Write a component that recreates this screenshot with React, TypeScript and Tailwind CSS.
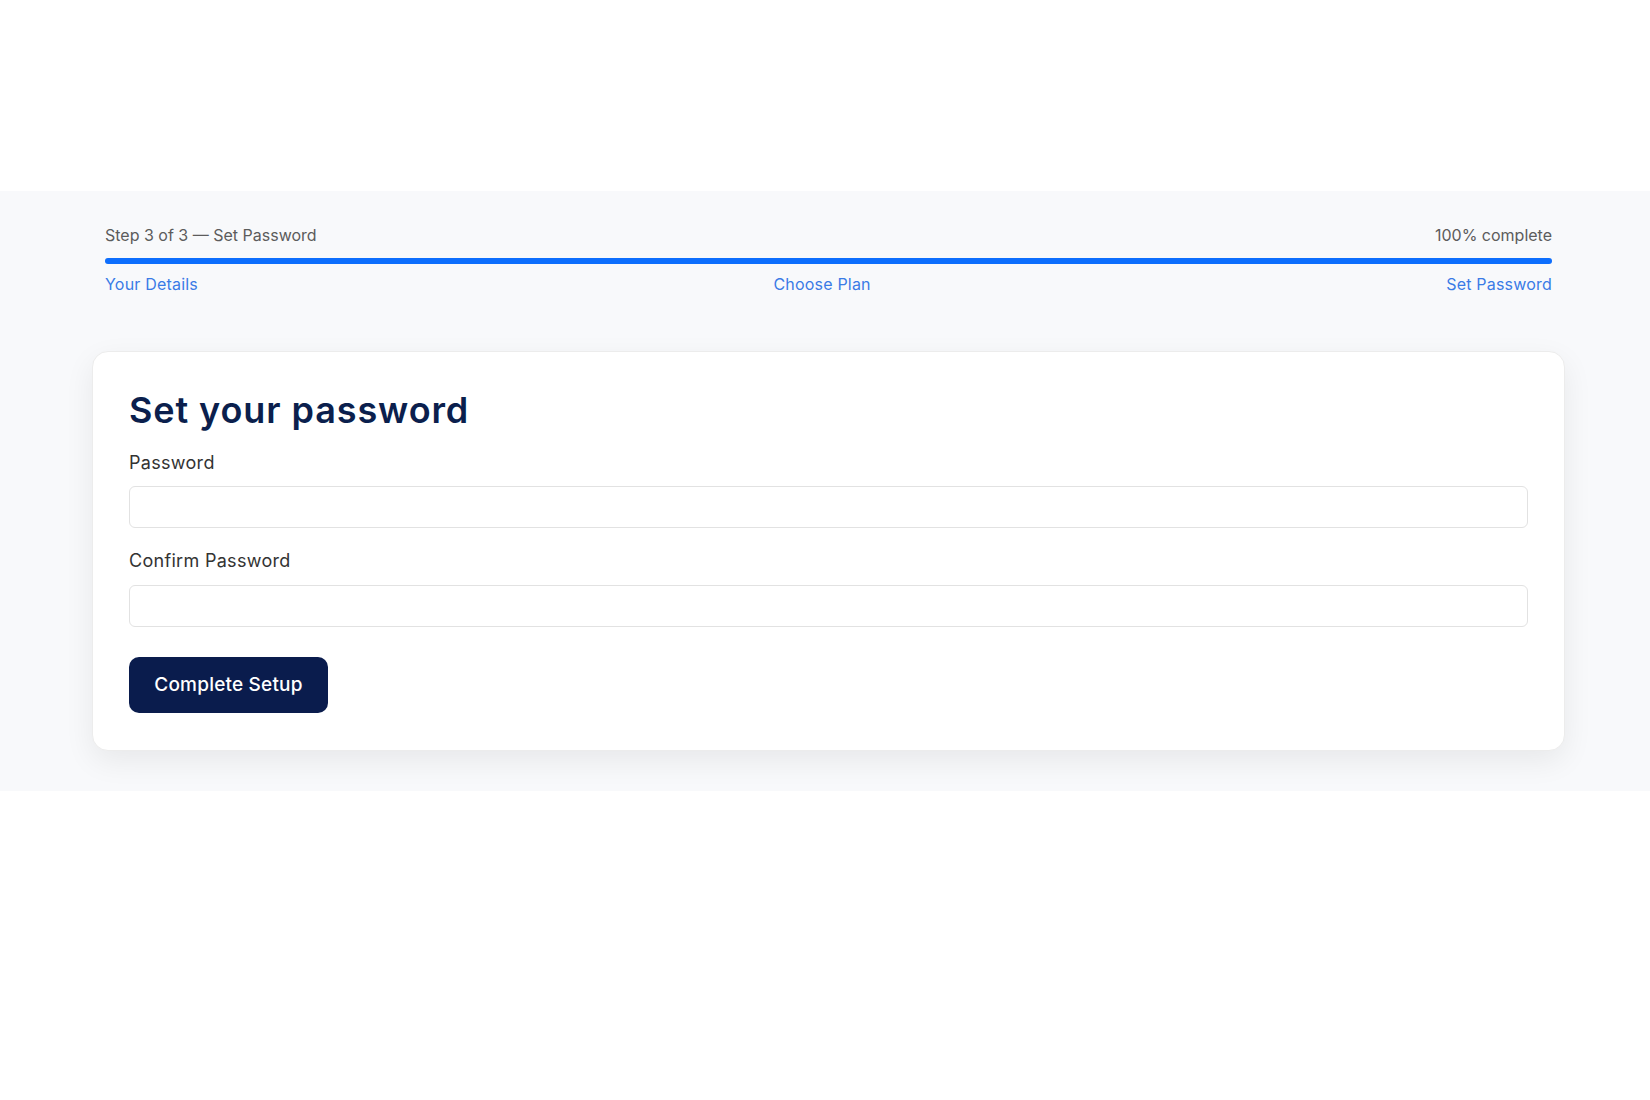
export default function App() {
  const steps = ['Your Details', 'Choose Plan', 'Set Password']
  return (
    <div className="min-h-screen bg-white font-['Inter',_'Noto_Sans',_sans-serif]">
      <div className="h-[191px]" />
      <div className="bg-[#f8f9fb] pt-[32px] pb-[40px] pl-[92px] pr-[85px]">
        {/* Progress */}
        <div className="mx-[13px]">
          <div className="flex items-center justify-between text-[16px] leading-[24px] text-[#5c5c5c]">
            <span>Step 3 of 3 — Set Password</span>
            <span>100% complete</span>
          </div>
          <div className="mt-[11px] h-[6px] w-full rounded-full bg-[#e5e7eb]">
            <div className="h-full rounded-full bg-[#0d6efd]" style={{ width: '100%' }} />
          </div>
          <div className="mt-[8px] flex justify-between text-[16px] leading-[24px] text-[#3a7be6] tracking-[0.2px]">
            {steps.map((s) => (
              <span key={s}>{s}</span>
            ))}
          </div>
        </div>

        {/* Card */}
        <div className="mt-[55px] rounded-[16px] border border-[#ececec] bg-white px-[36px] pt-[37px] pb-[37px] shadow-[0_10px_30px_rgba(0,0,0,0.07)]">
          <h1 className="text-[36px] leading-[43px] font-semibold text-[#0b1f4d] tracking-[0.9px]">
            Set your password
          </h1>
          <label className="mt-[17px] block text-[18px] leading-[27px] text-[#333] tracking-[0.3px]">
            Password
          </label>
          <input
            type="password"
            className="mt-[10px] block h-[42px] w-full rounded-[6px] border border-[#e2e2e2] bg-white px-3 outline-none"
          />
          <label className="mt-[19px] block text-[18px] leading-[27px] text-[#333] tracking-[0.3px]">
            Confirm Password
          </label>
          <input
            type="password"
            className="mt-[11px] block h-[42px] w-full rounded-[6px] border border-[#e2e2e2] bg-white px-3 outline-none"
          />
          <button className="mt-[30px] flex h-[56px] w-[199px] items-center justify-center rounded-[10px] bg-[#0a1c4d] text-[19px] font-medium text-white tracking-[0.2px]">
            Complete Setup
          </button>
        </div>
      </div>
    </div>
  )
}
